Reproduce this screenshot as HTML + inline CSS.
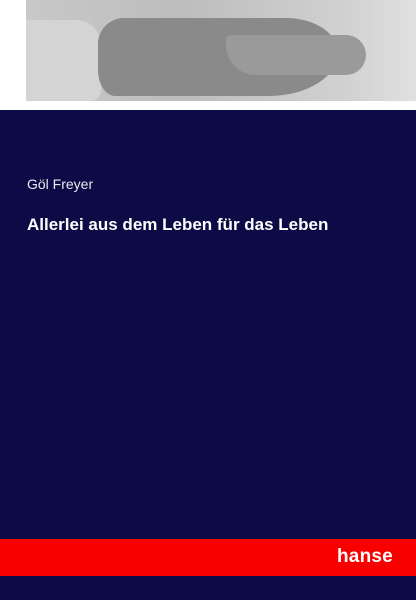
<!DOCTYPE html>
<html><head><meta charset="utf-8"><style>
html,body{margin:0;padding:0}
body{width:416px;height:600px;background:#0d0b45;position:relative;overflow:hidden;font-family:"Liberation Sans",sans-serif}
.top{position:absolute;left:0;top:0;width:416px;height:110px;background:#fff}
.img{position:absolute;left:26px;top:0;width:390px;height:101px;background:linear-gradient(90deg,#c8c8c8,#bdbdbd 40%,#d0d0d0 80%,#e0e0e0);overflow:hidden}
.sleeve{position:absolute;left:0;top:20px;width:75px;height:81px;background:#d4d4d4;border-radius:0 25px 10px 0}
.hand{position:absolute;left:72px;top:18px;width:240px;height:78px;background:#8a8a8a;border-radius:30px 60px 80px 20px/30px 40px 50px 30px}
.fingers{position:absolute;left:200px;top:35px;width:140px;height:40px;background:#9a9a9a;border-radius:10px 40px 40px 60px}
.author{position:absolute;left:27px;top:176px;color:#e8e8f0;font-size:14px}
.title{position:absolute;left:27px;top:215px;color:#fff;font-size:17px;font-weight:bold}
.red{position:absolute;left:0;top:539px;width:416px;height:37px;background:#f80000}
.logo{position:absolute;left:337px;top:546px;color:#fff;font-size:19px;font-weight:bold;letter-spacing:0.2px}
</style></head><body>
<div class="top"><div class="img"><div class="sleeve"></div><div class="hand"></div><div class="fingers"></div></div></div>
<div class="author">Göl Freyer</div>
<div class="title">Allerlei aus dem Leben für das Leben</div>
<div class="red"></div>
<div class="logo">hanse</div>
</body></html>
